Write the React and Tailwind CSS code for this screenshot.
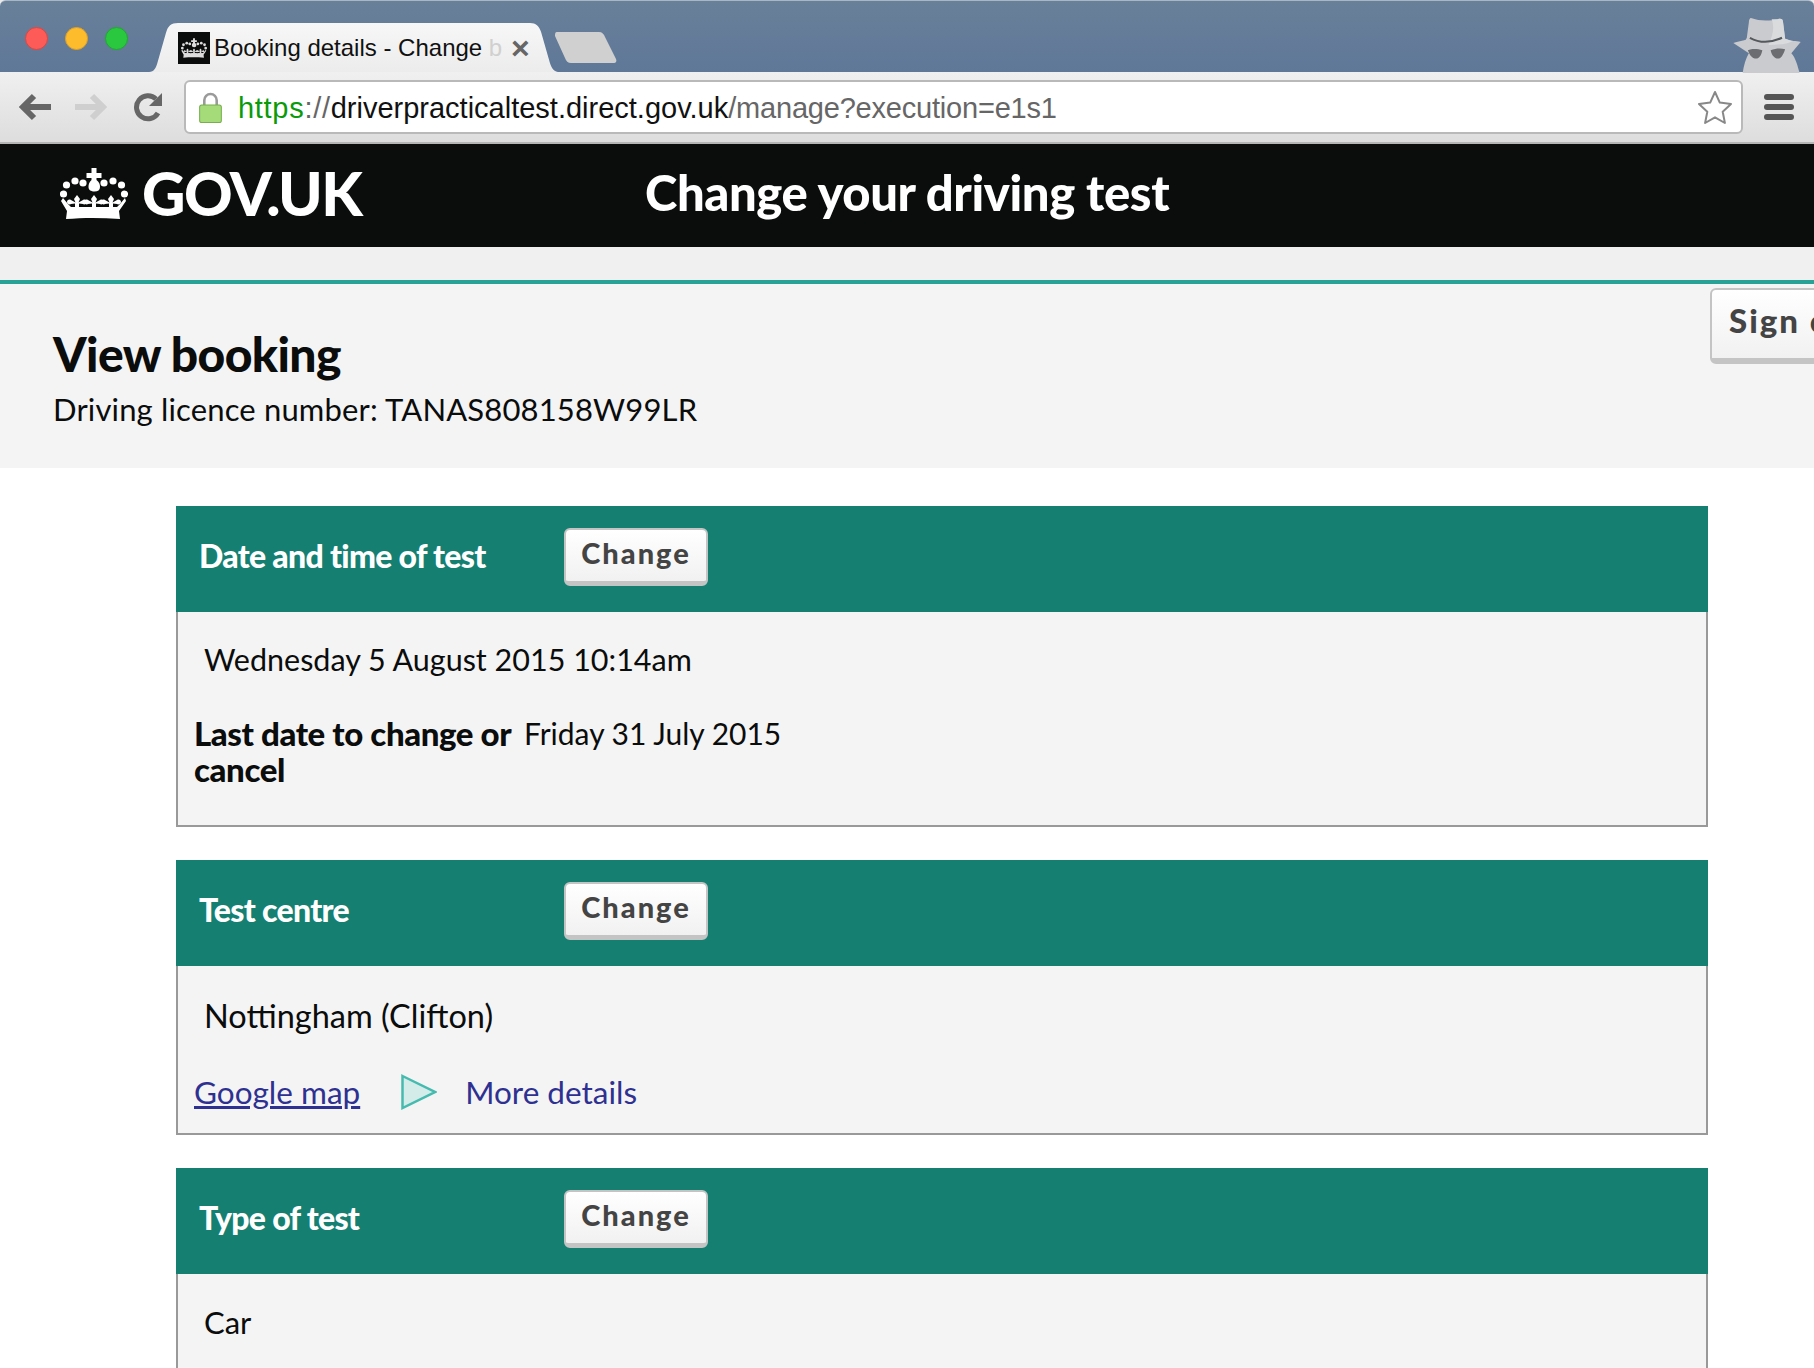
import React from 'react';

const sans = "font-['Lato','Noto_Sans',sans-serif]";

function Fleur({ x }) {
  return (
    <g transform={`translate(${x} 27)`}>
      <path d="M0 0l3 4-1.500 3.500L6 5c2-1 4 0 4 2s-3 3-4 2L2 8.500V12H-2V8.500L-6 9c-1 1-4 0-4-2s2-3 4-2l4.500 2.500L-3 4z" />
      <rect x="-7" y="12" width="14" height="3" />
    </g>
  );
}

function Crown({ className }) {
  const dots = [[3.5, 26], [6.5, 17], [15, 13], [23, 15], [44, 15], [53, 13], [61.5, 17], [64.5, 26]];
  return (
    <svg viewBox="0 0 68 51" className={className} fill="currentColor">
      {dots.map(([cx, cy]) => (
        <circle key={`${cx}-${cy}`} cx={cx} cy={cy} r="3.6" />
      ))}
      <path d="M31.500 0h5v5h5v5h-5v2c3 2 3.500 5 3.500 7 0 3-2 4.500-5.500 4.500S28.500 22 28.500 19c0-2 .5-5 3-7v-2h-5V5h5z" />
      <Fleur x={17} />
      <Fleur x={34} />
      <Fleur x={51} />
      <path d="M3 30l5 6 3 3h46l3-3 5-6 1 3-7 10 1 8c-18-1.500-37-1.500-54 0l1-8-6-10z" />
    </svg>
  );
}

function TabShape() {
  return (
    <svg viewBox="0 0 413 50" preserveAspectRatio="none" className="absolute inset-0 w-full h-full">
      <defs>
        <linearGradient id="tab" x1="0" y1="0" x2="0" y2="1">
          <stop offset="0" stopColor="#f7f7f7" />
          <stop offset="1" stopColor="#ececec" />
        </linearGradient>
      </defs>
      <path d="M0 50c6 0 8-2 10-8L19 10c2-7 5-10 12-10h352c6 0 9 3 11 9l9 32c2 6 4 9 10 9z" fill="url(#tab)" />
    </svg>
  );
}

function Incognito() {
  return (
    <svg viewBox="0 0 67 56" className="w-[70px] h-[58px]">
      <path d="M18 3c8 3 18 3 26 1 3-1 5 0 5 3l2 16c3 1 6 2 8 2 2 0 5 0 7 1l-9 11c4 4 6 12 8 19H10c1-7 3-14 6-19L1 27c4-1 9-2 12-3l1-2 2-15c0-2 1-4 2-4z" fill="#c9cbce" />
      <path d="M38 4c3 0 5 0 6 0 3-1 5 0 5 3l2 16c3 1 6 2 8 2-6 3-16 4-24 4 4-9 6-17 3-25z" fill="#dadbdd" />
      <path d="M17 22c9 5 20 5 31 0" fill="none" stroke="#55585c" strokeWidth="2" />
      <path d="M15 34c5-2 10-1 14 0-1 5-3 8-6 8-4 0-6-3-8-8zM37 34c5-2 10-2 14-1-2 6-4 9-7 9s-6-3-7-8z" fill="#6b6d70" />
    </svg>
  );
}

function ChromeBar() {
  return (
    <div className="bg-[#eaeaea]">
      {/* tab strip */}
      <div className="h-[72px] rounded-t-[6px] bg-[linear-gradient(#698099,#5f7898)] border-t border-[#a9b6c6] flex items-end relative">
        <div className="flex items-center gap-[17px] pl-[25px] self-center mt-[3px]">
          <span className="w-[23px] h-[23px] rounded-full bg-[#fc5b57] border border-[#e0443e]" />
          <span className="w-[23px] h-[23px] rounded-full bg-[#fdbc2c] border border-[#dfa023]" />
          <span className="w-[23px] h-[23px] rounded-full bg-[#29c83f] border border-[#1daa2c]" />
        </div>
        <div className="relative ml-[19px] w-[413px] h-[49px] flex items-center pl-[31px]">
          <TabShape />
          <div className="relative w-[32px] h-[32px] bg-[#0b0c0c] flex items-center justify-center text-[#dddddd]">
            <Crown className="w-[26px] h-[20px]" />
          </div>
          <span className="relative ml-[4px] w-[286px] whitespace-nowrap font-['Liberation_Sans',sans-serif] text-[24px] leading-[32px] text-[#111]">
            Booking details - Change <span className="text-[#d0d0d0]">b</span>
          </span>
          <span className="relative ml-[11px] text-[#666] font-['Liberation_Sans',sans-serif] font-bold text-[32px] leading-none">×</span>
        </div>
        <svg viewBox="0 0 62 31" className="w-[62px] h-[31px] ml-[-5px] mb-[9px]">
          <path d="M2 0h42c3 0 5 2 6 5l11 22c1 2 0 4-2 4H16c-3 0-5-2-6-5L0 4C0 2 0 0 2 0z" fill="#d0d0d0" />
        </svg>
        <div className="ml-auto mr-[12px] h-[57px]">
          <Incognito />
        </div>
      </div>
      {/* toolbar */}
      <div className="h-[72px] border-b-2 border-[#b5b5b5] bg-[linear-gradient(#f0f0f0,#dddddd)] flex items-center pl-[19px]">
        <svg viewBox="0 0 32 28" className="w-[32px] h-[28px] text-[#666]" fill="none" stroke="currentColor" strokeWidth="6">
          <path d="M32 14H6M15 3L4 14l11 11" />
        </svg>
        <svg viewBox="0 0 32 28" className="w-[32px] h-[28px] ml-[24px] text-[#cfcfcf]" fill="none" stroke="currentColor" strokeWidth="6">
          <path d="M0 14h26M17 3l11 11-11 11" />
        </svg>
        <svg viewBox="0 0 28 30" className="w-[28px] h-[30px] ml-[27px] text-[#666]" fill="none">
          <path d="M22 7a11.500 11.500 0 1 0 2 14" stroke="currentColor" strokeWidth="5" />
          <path d="M28 1v13H15z" fill="currentColor" />
        </svg>
        <div className="ml-[22px] w-[1559px] h-[54px] bg-white border-2 border-[#b9b9b9] rounded-[6px] flex items-center pl-[13px] pr-[8px]">
          <svg viewBox="0 0 22 30" className="w-[23px] h-[31px]">
            <path d="M5 14V8a6 6 0 0 1 12 0v6" fill="none" stroke="#9a9a9a" strokeWidth="2.500" />
            <rect x="0.5" y="12.5" width="21" height="17" rx="2" fill="#a5dc79" stroke="#78ae50" />
          </svg>
          <div className="ml-[16px] mt-[2px] font-['Liberation_Sans',sans-serif] text-[29px] leading-none text-[#666] whitespace-nowrap">
            <span className="tracking-[0.7px]"><span className="text-[#0a9a0a]">https</span>://</span><span className="text-[#111]">driverpracticaltest.direct.gov.uk</span><span className="tracking-[-0.2px]">/manage?execution=e1s1</span>
          </div>
          <svg viewBox="0 0 36 34" className="ml-auto w-[36px] h-[34px]" fill="#fff" stroke="#888" strokeWidth="2" strokeLinejoin="round">
            <path d="M18 2l4.800 10.600 11.200 1.400-8.300 7.700 2.200 11.300-9.900-5.700-9.900 5.700 2.200-11.300L2 14l11.200-1.400z" />
          </svg>
        </div>
        <div className="ml-[21px] w-[30px] flex flex-col gap-[4px]">
          <span className="h-[6px] rounded-full bg-[#555]" />
          <span className="h-[6px] rounded-full bg-[#555]" />
          <span className="h-[6px] rounded-full bg-[#555]" />
        </div>
      </div>
    </div>
  );
}

function ChangeButton() {
  return (
    <button className={`w-[144px] h-[58px] pb-[5px] rounded-[6px] border-2 border-b-[5px] border-[#c4c4c4] bg-[linear-gradient(#fff,#f1f1f1)] text-[#444] font-black text-[29px] tracking-[2px] ${sans}`}>
      Change
    </button>
  );
}

function Card({ title, children }) {
  return (
    <section className="mb-[33px]">
      <div className="h-[106px] bg-[#157f72] flex items-center pl-[23px]">
        <h2 className="w-[365px] mt-[-7px] text-white text-[32px] font-black tracking-[-0.7px]">{title}</h2>
        <div className="mt-[-4px]">
          <ChangeButton />
        </div>
      </div>
      <div className="bg-[#f4f4f4] border-2 border-t-0 border-[#999] text-[#0b0c0c]">
        {children}
      </div>
    </section>
  );
}

export default function App() {
  return (
    <div className={`h-[1368px] overflow-hidden bg-white ${sans}`}>
      <ChromeBar />
      <header className="h-[103px] bg-[#0b0c0c] text-white flex items-center">
        <div className="ml-[60px] w-[585px] flex items-center mt-[-5px]">
          <Crown className="w-[68px] h-[51px]" />
          <span className="ml-[14px] text-[60px] font-black leading-none tracking-[-1.500px]">GOV.UK</span>
        </div>
        <h1 className="mt-[-5px] text-[49px] font-black tracking-[-0.4px]">Change your driving test</h1>
      </header>
      <div className="h-[33px] bg-[#f0f0f0]" />
      <div className="relative h-[188px] bg-[#f4f4f4] border-t-4 border-[#28a197] pt-[45px] pl-[53px]">
        <h2 className="text-[48px] leading-[50px] font-black tracking-[-0.6px] text-[#0b0c0c]">View booking</h2>
        <p className="mt-[10px] text-[31px] leading-[40px] tracking-[0.15px] text-[#0b0c0c]">Driving licence number: TANAS808158W99LR</p>
        <button className="absolute left-[1710px] top-[4px] w-[160px] h-[76px] text-left pl-[17px] pb-[6px] rounded-[6px] border-2 border-b-[6px] border-[#c4c4c4] bg-[linear-gradient(#fff,#f1f1f1)] text-[#444] font-black text-[33px] tracking-[2px] whitespace-nowrap">
          Sign out
        </button>
      </div>
      <main className="mt-[38px] mx-[176px] w-[1532px]">
        <Card title="Date and time of test">
          <div className="h-[213px] pt-[27px] pl-[26px]">
            <p className="text-[30.5px] leading-[40px]">Wednesday 5 August 2015 10:14am</p>
            <div className="mt-[36px] ml-[-10px] flex items-start leading-[36px]">
              <strong className="w-[330px] text-[33px] font-black tracking-[-0.4px]">Last date to change or cancel</strong>
              <span className="text-[30px]">Friday 31 July 2015</span>
            </div>
          </div>
        </Card>
        <Card title="Test centre">
          <div className="h-[167px] pt-[30px] pl-[26px]">
            <p className="text-[32.5px] leading-[40px]">Nottingham (Clifton)</p>
            <div className="mt-[36px] ml-[-10px] flex items-center text-[31.5px] leading-[40px]">
              <a href="#" className="underline text-[#2e3191]">Google map</a>
              <svg viewBox="0 0 36 36" className="w-[36px] h-[36px] ml-[41px]">
                <path d="M1.500 2L34 18 1.500 34z" fill="#d3ece9" stroke="#45bbb0" strokeWidth="2.500" />
              </svg>
              <a href="#" className="ml-[28px] text-[#2e3191]">More details</a>
            </div>
          </div>
        </Card>
        <Card title="Type of test">
          <div className="h-[200px] pt-[28px] pl-[26px]">
            <p className="text-[31px] leading-[40px]">Car</p>
          </div>
        </Card>
      </main>
    </div>
  );
}
